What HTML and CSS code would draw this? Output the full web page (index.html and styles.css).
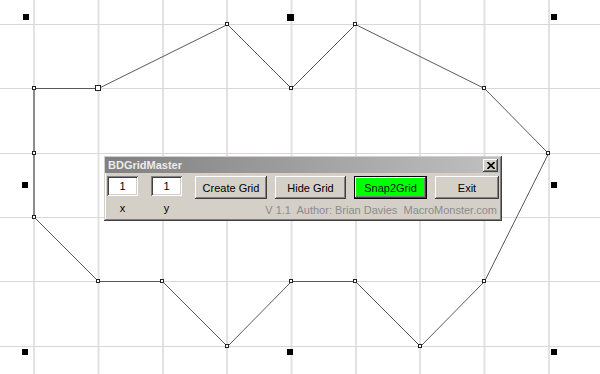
FILE: index.html
```html
<!DOCTYPE html>
<html lang="en">
<head>
    <meta charset="UTF-8">
    <meta name="viewport" content="width=device-width, initial-scale=1.0">
    <title>BDGridMaster</title>
    <link rel="stylesheet" href="styles.css">
</head>
<body>
    <!-- drawing sheet: grid, shape and selection handles -->
    <svg class="sheet" width="600" height="374" viewBox="0 0 600 374">
        <g class="grid-v">
            <line x1="34" y1="0" x2="34" y2="374"/>
            <line x1="98.5" y1="0" x2="98.5" y2="374"/>
            <line x1="163" y1="0" x2="163" y2="374"/>
            <line x1="227" y1="0" x2="227" y2="374"/>
            <line x1="291.5" y1="0" x2="291.5" y2="374"/>
            <line x1="356" y1="0" x2="356" y2="374"/>
            <line x1="420" y1="0" x2="420" y2="374"/>
            <line x1="484.5" y1="0" x2="484.5" y2="374"/>
            <line x1="549" y1="0" x2="549" y2="374"/>
        </g>
        <g class="grid-h">
            <line x1="0" y1="24.5" x2="600" y2="24.5"/>
            <line x1="0" y1="88.5" x2="600" y2="88.5"/>
            <line x1="0" y1="153.5" x2="600" y2="153.5"/>
            <line x1="0" y1="217.5" x2="600" y2="217.5"/>
            <line x1="0" y1="281.5" x2="600" y2="281.5"/>
            <line x1="0" y1="346.5" x2="600" y2="346.5"/>
        </g>

        <polyline class="shape" points="34.5,88.5 98.5,88.5 227.5,24.5 291.5,88.5 355.5,24.5 484.5,88.5 548.5,153.5 484.5,281.5 420.5,346.5 355.5,281.5 291.5,281.5 227.5,346.5 162.5,281.5 98.5,281.5 34.5,217.5"/>
        <line class="edge-left" x1="34" y1="88" x2="34" y2="218"/>

        <g class="nodes">
            <rect x="32.5" y="86.5" width="3" height="3"/>
            <rect x="95.5" y="85.5" width="5" height="5"/>
            <rect x="225.5" y="22.5" width="3" height="3"/>
            <rect x="289.5" y="86.5" width="3" height="3"/>
            <rect x="353.5" y="22.5" width="3" height="3"/>
            <rect x="482.5" y="86.5" width="3" height="3"/>
            <rect x="546.5" y="151.5" width="3" height="3"/>
            <rect x="482.5" y="279.5" width="3" height="3"/>
            <rect x="418.5" y="344.5" width="3" height="3"/>
            <rect x="353.5" y="279.5" width="3" height="3"/>
            <rect x="289.5" y="279.5" width="3" height="3"/>
            <rect x="225.5" y="344.5" width="3" height="3"/>
            <rect x="160.5" y="279.5" width="3" height="3"/>
            <rect x="96.5" y="279.5" width="3" height="3"/>
            <rect x="32.5" y="215.5" width="3" height="3"/>
            <rect x="32.5" y="151.5" width="3" height="3"/>
        </g>

        <g class="handles">
            <rect x="23" y="14" width="6" height="6"/>
            <rect x="287" y="14" width="7" height="7"/>
            <rect x="551" y="14" width="6" height="6"/>
            <rect x="22" y="182" width="6" height="6"/>
            <rect x="551" y="182" width="6" height="6"/>
            <rect x="22" y="349" width="6" height="6"/>
            <rect x="287" y="349" width="6" height="6"/>
            <rect x="551" y="349" width="6" height="6"/>
        </g>
    </svg>

    <div class="dialog">
        <div class="titlebar">
            <span>BDGridMaster</span>
            <button class="close">
                <svg width="8" height="7" viewBox="0 0 8 7"><path d="M0.5 0 L7.5 7 M7.5 0 L0.5 7"/></svg>
            </button>
        </div>
        <div class="content">
            <div class="field">
                <input type="text" value="1">
                <label>x</label>
            </div>
            <div class="field">
                <input type="text" value="1">
                <label>y</label>
            </div>
            <div class="panel">
                <div class="buttons">
                    <button class="btn btn-create">Create Grid</button>
                    <button class="btn btn-hide">Hide Grid</button>
                    <button class="btn btn-snap">Snap2Grid</button>
                    <button class="btn btn-exit">Exit</button>
                </div>
                <div class="credit">V 1.1  Author: Brian Davies  MacroMonster.com</div>
            </div>
        </div>
    </div>
</body>
</html>
```

FILE: styles.css
```css
* { margin: 0; padding: 0; box-sizing: border-box; }

body {
    width: 600px;
    height: 374px;
    overflow: hidden;
    position: relative;
    background: #fff;
    font-family: "Liberation Sans", Arial, sans-serif;
    font-size: 11px;
    color: #000;
}

.sheet { display: block; }

.grid-v line { stroke: #e2e2e2; stroke-width: 2; }
.grid-h line { stroke: #d8d8d8; stroke-width: 1; }

.shape {
    fill: none;
    stroke: #5a5a5a;
    stroke-width: 1;
}

.edge-left { stroke: #8c8c8c; stroke-width: 2; }

.nodes rect {
    fill: #fff;
    stroke: #222;
    stroke-width: 1;
}

.handles rect { fill: #000; }

/* floating tool window */
.dialog {
    position: absolute;
    left: 104px;
    top: 156px;
    width: 398px;
    height: 65px;
    padding: 1px 2px 2px 1px;
    background: #d4d0c8;
    box-shadow: inset -1px -1px #404040, inset 1px 1px #d4d0c8,
                inset -2px -2px #808080, inset 2px 2px #fff;
}

.titlebar {
    height: 16px;
    display: flex;
    align-items: center;
    justify-content: space-between;
    padding: 0 2px 0 3px;
    background: linear-gradient(to right, #808080, #c0c0c0);
    color: #ececec;
    font-weight: bold;
    font-size: 11px;
}

.close {
    width: 15px;
    height: 13px;
    border: none;
    background: #d4d0c8;
    display: flex;
    align-items: center;
    justify-content: center;
    box-shadow: inset -1px -1px #404040, inset 1px 1px #fff,
                inset -2px -2px #808080;
}

.close svg path {
    stroke: #000;
    stroke-width: 1.6;
    fill: none;
}

.content {
    display: flex;
    gap: 13px;
    padding: 3px 0 0 2px;
}

.field {
    width: 31px;
    display: flex;
    flex-direction: column;
    align-items: center;
}

.field input {
    width: 31px;
    height: 20px;
    border: none;
    outline: none;
    background: #fff;
    font: inherit;
    color: #000;
    text-align: center;
    box-shadow: inset 1px 1px #808080, inset -1px -1px #fff,
                inset 2px 2px #404040, inset -2px -2px #d4d0c8;
}

.field label {
    margin-top: 6px;
    line-height: 13px;
}

.panel {
    display: flex;
    flex-direction: column;
}

.buttons {
    display: flex;
    gap: 8px;
}

.btn {
    height: 23px;
    border: none;
    background: #d4d0c8;
    font: inherit;
    color: #000;
    box-shadow: inset -1px -1px #404040, inset 1px 1px #fff,
                inset -2px -2px #808080;
}

.btn-create { width: 72px; }
.btn-hide { width: 71px; }
.btn-exit { width: 64px; }

.btn-snap {
    width: 73px;
    background: #00ff00;
    color: #001a00;
    box-shadow: inset 0 0 0 1px #000, inset -2px -2px #404040,
                inset 2px 2px #fff, inset -3px -3px #808080;
}

.credit {
    margin-top: 5px;
    padding-right: 2px;
    line-height: 13px;
    text-align: right;
    white-space: pre;
    color: #8c8c8c;
}
```
